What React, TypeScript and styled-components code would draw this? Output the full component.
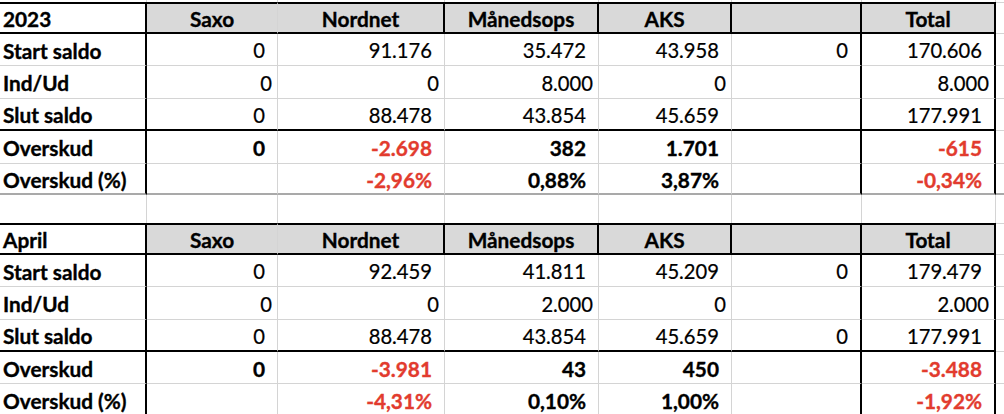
import React from "react";
import styled, { createGlobalStyle, css } from "styled-components";

const GlobalStyle = createGlobalStyle`
  html, body {
    margin: 0;
    padding: 0;
    background: #ffffff;
    overflow: hidden;
  }
  body {
    font-family: Lato, "Liberation Sans", sans-serif;
    color: #000000;
  }
`;

const GRID = "#d4d4d4";
const BLACK = "#000000";
const DARK = "#a9a9a9";
const HEAD_BG = "#d9d9d9";
const RED = "#e23b2e";

type Line = "grey" | "black" | "dark" | "none";

const lineColor = (l: Line) =>
  l === "black" ? BLACK : l === "dark" ? DARK : l === "grey" ? GRID : "transparent";
const lineWidth = (l: Line) => (l === "black" || l === "dark" ? 2 : l === "grey" ? 1 : 0);

const Sheet = styled.div`
  display: flex;
  flex-direction: column;
  width: 1004px;
`;

const Row = styled.div<{ $h: number }>`
  display: grid;
  grid-template-columns: 147px 131px 167px 154px 133px 130px 134px 1fr;
  height: ${(p) => p.$h}px;
`;

const Cell = styled.div<{
  $right: Line;
  $bottom: Line;
  $top?: Line;
  $head?: boolean;
  $align: "left" | "center" | "right";
  $bold?: boolean;
  $red?: boolean;
  $tight?: boolean;
}>`
  box-sizing: border-box;
  display: flex;
  align-items: center;
  overflow: hidden;
  white-space: nowrap;
  font-size: ${(p) => (p.$bold ? 20.8 : 20.2)}px;
  -webkit-text-stroke: ${(p) => (p.$bold ? 0.35 : 0.2)}px currentColor;
  padding-top: 1px;
  border-right: ${(p) => lineWidth(p.$right)}px solid ${(p) => lineColor(p.$right)};
  border-bottom: ${(p) => lineWidth(p.$bottom)}px solid ${(p) => lineColor(p.$bottom)};
  ${(p) =>
    p.$top &&
    css`
      border-top: ${lineWidth(p.$top)}px solid ${lineColor(p.$top)};
    `}
  background: ${(p) => (p.$head ? HEAD_BG : "#ffffff")};
  font-weight: ${(p) => (p.$bold ? 700 : 400)};
  color: ${(p) => (p.$red ? RED : "#000000")};
  justify-content: ${(p) =>
    p.$align === "left" ? "flex-start" : p.$align === "center" ? "center" : "flex-end"};
  padding-left: ${(p) => (p.$align === "left" ? 3 : 0)}px;
  padding-right: ${(p) => (p.$align === "right" ? (p.$tight ? 5 : 12) : 0)}px;
`;

const NCOLS = 8;

type DataRow = {
  label: string;
  values: string[];
  bold?: boolean;
  tight?: boolean;
  bottom: Line;
  h: number;
};

type TableSpec = {
  title: string;
  rows: DataRow[];
};

const headers = ["Saxo", "Nordnet", "Månedsops", "AKS", "", "Total"];

const tables: TableSpec[] = [
  {
    title: "2023",
    rows: [
      { label: "Start saldo", values: ["0", "91.176", "35.472", "43.958", "0", "170.606"], bottom: "grey", h: 32 },
      { label: "Ind/Ud", values: ["0", "0", "8.000", "0", "", "8.000"], tight: true, bottom: "grey", h: 33 },
      { label: "Slut saldo", values: ["0", "88.478", "43.854", "45.659", "", "177.991"], bottom: "black", h: 32 },
      { label: "Overskud", values: ["0", "-2.698", "382", "1.701", "", "-615"], bold: true, bottom: "grey", h: 33 },
      { label: "Overskud (%)", values: ["", "-2,96%", "0,88%", "3,87%", "", "-0,34%"], bold: true, bottom: "dark", h: 31 },
    ],
  },
  {
    title: "April",
    rows: [
      { label: "Start saldo", values: ["0", "92.459", "41.811", "45.209", "0", "179.479"], bottom: "grey", h: 32 },
      { label: "Ind/Ud", values: ["0", "0", "2.000", "0", "", "2.000"], tight: true, bottom: "grey", h: 33 },
      { label: "Slut saldo", values: ["0", "88.478", "43.854", "45.659", "0", "177.991"], bottom: "black", h: 32 },
      { label: "Overskud", values: ["0", "-3.981", "43", "450", "", "-3.488"], bold: true, bottom: "grey", h: 32 },
      { label: "Overskud (%)", values: ["", "-4,31%", "0,10%", "1,00%", "", "-1,92%"], bold: true, bottom: "grey", h: 32 },
    ],
  },
];

// right border of data cells: index 0 = label col, 1..6 value cols, 7 extra col
const dataRight: Line[] = ["black", "grey", "grey", "grey", "grey", "black", "black", "none"];
const headRight: Line[] = ["black", "grey", "black", "black", "black", "black", "black", "none"];

function BlankRow({ h, bottom }: { h: number; bottom: Line }) {
  return (
    <Row $h={h}>
      {Array.from({ length: NCOLS }).map((_, i) => (
        <Cell key={i} $right={i === NCOLS - 1 ? "none" : "grey"} $bottom={bottom} $align="left" />
      ))}
    </Row>
  );
}

function HeaderRow({ title }: { title: string }) {
  const cells = [title, ...headers, ""];
  return (
    <Row $h={32}>
      {cells.map((c, i) => (
        <Cell
          key={i}
          $top={i === NCOLS - 1 ? "grey" : "black"}
          $bottom={i === NCOLS - 1 ? "grey" : "black"}
          $right={headRight[i]}
          $head={i > 0 && i < NCOLS - 1}
          $align={i === 0 ? "left" : "center"}
          $bold
        >
          {c}
        </Cell>
      ))}
    </Row>
  );
}

function DataLine({ row }: { row: DataRow }) {
  return (
    <Row $h={row.h}>
      <Cell $right={dataRight[0]} $bottom={row.bottom} $align="left" $bold>
        {row.label}
      </Cell>
      {row.values.map((v, i) => (
        <Cell
          key={i}
          $right={dataRight[i + 1]}
          $bottom={row.bottom}
          $align="right"
          $bold={row.bold}
          $red={v.startsWith("-")}
          $tight={row.tight}
        >
          {v}
        </Cell>
      ))}
      <Cell $right="none" $bottom={row.bottom === "black" ? "grey" : row.bottom} $align="left" />
    </Row>
  );
}

export default function App() {
  return (
    <>
      <GlobalStyle />
      <Sheet>
        <BlankRow h={2} bottom="none" />
        <HeaderRow title={tables[0].title} />
        {tables[0].rows.map((r) => (
          <DataLine key={r.label} row={r} />
        ))}
        <BlankRow h={28} bottom="none" />
        <HeaderRow title={tables[1].title} />
        {tables[1].rows.map((r) => (
          <DataLine key={r.label} row={r} />
        ))}
      </Sheet>
    </>
  );
}
